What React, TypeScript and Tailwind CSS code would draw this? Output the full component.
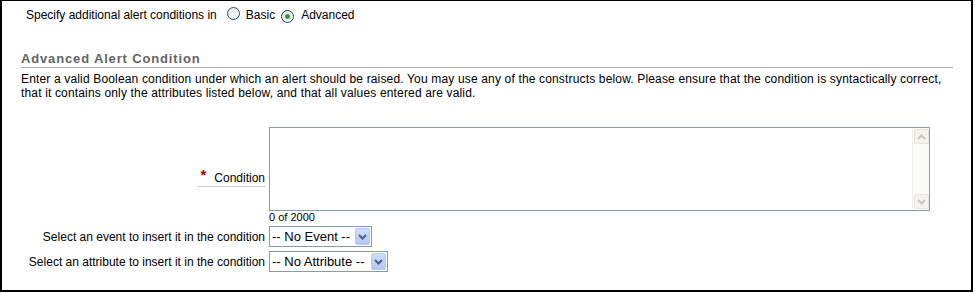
import React from "react"

const font = "font-['Liberation_Sans',Arial,sans-serif]"

function Radio({ checked }: { checked?: boolean }) {
  return (
    <span className="relative inline-flex h-[13px] w-[13px] shrink-0 items-center justify-center rounded-full border border-[#1c5180] bg-gradient-to-br from-[#dcdcd5] via-[#f4f4f1] to-white">
      {checked && <span className="h-[5px] w-[5px] rounded-full bg-[#2ea42e]" />}
    </span>
  )
}

function Chevron({ className }: { className?: string }) {
  return (
    <svg viewBox="0 0 9 6" className={className} width="9" height="6">
      <path d="M1 1 L4.5 4.5 L8 1" fill="none" stroke="currentColor" strokeWidth="2" />
    </svg>
  )
}

function Select({ label, width }: { label: string; width: string }) {
  return (
    <div className={`flex h-[21px] ${width} items-center justify-between border border-[#7f9db9] bg-white pl-[2px] pr-[1px]`}>
      <span className="text-[13px] leading-[16px] text-black whitespace-pre">{label}</span>
      <span className="flex h-[17px] w-[15px] items-center justify-center rounded-[2px] border border-[#b9cbf3] bg-gradient-to-b from-[#d0defd] to-[#b3c6f7] text-[#4d6185]">
        <Chevron />
      </span>
    </div>
  )
}

function ScrollButton({ up }: { up?: boolean }) {
  return (
    <span className="flex h-[15px] w-[15px] items-center justify-center rounded-[2px] border border-[#e8e6dc] bg-[#f3f2ec] text-[#c9c7bc]">
      <Chevron className={up ? "rotate-180" : ""} />
    </span>
  )
}

export default function App() {
  return (
    <div className={`${font} h-[292px] w-[973px] border-t border-r-2 border-b-2 border-l-2 border-black bg-white text-[12px] text-black`}>
      {/* Basic / Advanced switch */}
      <div className="mt-[6px] flex h-[16px] items-center pl-[24px] leading-[16px]">
        <span>Specify additional alert conditions in</span>
        <span className="ml-[10px]"><Radio /></span>
        <span className="ml-[6px]">Basic</span>
        <span className="ml-[6px]"><Radio checked /></span>
        <span className="ml-[7px]">Advanced</span>
      </div>

      {/* Section */}
      <div className="mt-[28px] ml-[19px] mr-[18px]">
        <h2 className="border-b border-[#aaaaaa] text-[13px] leading-[16px] font-bold tracking-[0.85px] text-[#646464]">
          Advanced Alert Condition
        </h2>
        <p className="mt-[4px] leading-[14px] tracking-[0.16px]">
          Enter a valid Boolean condition under which an alert should be raised. You may use any of the constructs below. Please ensure that the condition is syntactically correct,
          <br />
          that it contains only the attributes listed below, and that all values entered are valid.
        </p>
      </div>

      {/* Form */}
      <div className="mt-[27px] flex flex-col">
        <div className="flex">
          <div className="flex w-[263px] justify-end">
            <div className="mt-[43px] flex h-[16px] items-start border-b border-[#cccccc] pl-[3px] leading-[16px] box-content">
              <span className="mt-[-3px] text-[15px] font-bold text-[#a00000]">*</span>
              <span className="ml-[8px]">Condition</span>
            </div>
          </div>
          <div className="ml-[4px] flex flex-col">
            <div className="flex h-[84px] w-[661px] border border-[#7f9db9] bg-white">
              <textarea className="flex-1 resize-none outline-none" readOnly />
              <div className="flex w-[17px] flex-col justify-between border-l border-[#f0efe9] bg-[#fbfbf8] py-[1px] pl-[1px]">
                <ScrollButton up />
                <ScrollButton />
              </div>
            </div>
            <span className="text-[11px] leading-[13px]">0 of 2000</span>
          </div>
        </div>

        <div className="mt-[2px] flex items-center">
          <div className="w-[263px] text-right leading-[16px]">Select an event to insert it in the condition</div>
          <div className="ml-[4px]"><Select label="-- No Event -- " width="w-[103px]" /></div>
        </div>

        <div className="mt-[4px] flex items-center">
          <div className="w-[263px] text-right leading-[16px]">Select an attribute to insert it in the condition</div>
          <div className="ml-[4px]"><Select label="-- No Attribute -- " width="w-[119px]" /></div>
        </div>
      </div>
    </div>
  )
}
